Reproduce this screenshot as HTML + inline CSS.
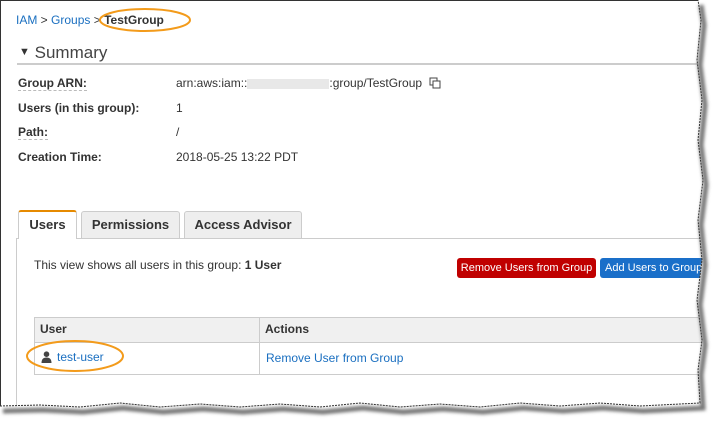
<!DOCTYPE html>
<html><head><style>
body{margin:0;width:728px;height:427px;background:#fff;font-family:"Liberation Sans",sans-serif;font-size:12px;color:#333;position:relative;overflow:hidden}
.a{position:absolute;white-space:nowrap}
.l{color:#1a6fc0}
b{font-weight:bold}
.lab{font-weight:bold;border-bottom:1px dashed #bbb}
.tab{position:absolute;top:211px;height:26px;border:1px solid #ccc;border-bottom:none;background:#eee;font-weight:bold;font-size:13px;text-align:center;line-height:25px;border-radius:3px 3px 0 0}
.btn{position:absolute;top:258px;height:20px;color:#fff;font-size:11px;line-height:20px;border-radius:3px;padding:0;text-align:center;overflow:hidden}
</style></head><body>
<div class="a" style="left:0;top:0;width:698px;height:1px;background:#333"></div>
<div class="a" style="left:0;top:0;width:1px;height:406px;background:#333"></div>
<div class="a" style="left:16px;top:13px"><span class="l">IAM</span> &gt; <span class="l">Groups</span> &gt; <b style="color:#333">TestGroup</b></div>
<svg class="a" style="left:98px;top:6px" width="96" height="30"><ellipse cx="47" cy="14" rx="45" ry="11" fill="none" stroke="#f39b1b" stroke-width="2"/></svg>
<div class="a" style="left:19px;top:43px;font-size:17px"><span style="font-size:11px;vertical-align:3px">▼</span> <span style="color:#444">Summary</span></div>
<div class="a" style="left:17px;top:63px;width:690px;height:2px;background:#ccc"></div>
<div class="a lab" style="left:18px;top:76px">Group ARN:</div>
<div class="a" style="left:176px;top:76px">arn:aws:iam::<span style="display:inline-block;width:82px;height:10px;background:#e8e8e8;vertical-align:middle"></span>:group/TestGroup &nbsp;<svg width="12" height="12" style="vertical-align:-2px"><rect x="1" y="1" width="7" height="7" fill="#fff" stroke="#444"/><rect x="4" y="4" width="7" height="7" fill="#fff" stroke="#444"/></svg></div>
<div class="a" style="left:18px;top:101px;font-weight:bold">Users (in this group):</div>
<div class="a" style="left:176px;top:101px">1</div>
<div class="a lab" style="left:18px;top:125px">Path:</div>
<div class="a" style="left:176px;top:125px">/</div>
<div class="a" style="left:18px;top:150px;font-weight:bold">Creation Time:</div>
<div class="a" style="left:176px;top:150px">2018-05-25 13:22 PDT</div>
<div class="a" style="left:16px;top:238px;width:700px;height:168px;border:1px solid #ccc"></div>
<div class="tab" style="left:18px;width:57px;background:#fff;border-top:2px solid #e68a00;height:27px;top:210px">Users</div>
<div class="tab" style="left:81px;width:97px">Permissions</div>
<div class="tab" style="left:184px;width:116px">Access Advisor</div>
<div class="a" style="left:34px;top:258px">This view shows all users in this group: <b>1 User</b></div>
<div class="btn" style="left:457px;width:139px;background:#c00000">Remove Users from Group</div>
<div class="btn" style="left:600px;width:110px;background:#1a6fc9;text-align:left;padding-left:5px">Add Users to Group</div>
<div class="a" style="left:34px;top:317px;width:690px;height:56px;border:1px solid #ccc"></div>
<div class="a" style="left:35px;top:318px;width:690px;height:24px;background:#f0f0f0;border-bottom:1px solid #ccc"></div>
<div class="a" style="left:259px;top:318px;width:1px;height:56px;background:#ccc"></div>
<div class="a" style="left:40px;top:322px;font-weight:bold">User</div>
<div class="a" style="left:265px;top:322px;font-weight:bold">Actions</div>
<svg class="a" style="left:41px;top:351px" width="11" height="12"><circle cx="5.5" cy="3.2" r="2.8" fill="#444"/><path d="M0.5,12 Q0.5,6.5 5.5,6.5 Q10.5,6.5 10.5,12 Z" fill="#444"/></svg>
<div class="a l" style="left:57px;top:350px">test-user</div>
<div class="a l" style="left:266px;top:351px">Remove User from Group</div>
<svg class="a" style="left:24px;top:338px" width="106" height="38"><ellipse cx="51" cy="18" rx="48" ry="15" fill="none" stroke="#f39b1b" stroke-width="2"/></svg>
<svg class="a" style="left:0;top:0" width="728" height="427">
<defs><filter id="f"><feGaussianBlur stdDeviation="1.5"/></filter></defs>
<path d="M698,0 L728,0 L728,427 L0,427 L0,406 L40,405 L80,407 L120,403 L160,407 L200,404 L240,407 L280,404 L320,407 L360,403 L400,407 L440,404 L480,407 L520,403 L560,406 L600,403 L640,406 L680,404 L700,403 L698,370 L702,340 L697,300 L702,260 L698,220 L703,180 L698,140 L702,100 L697,60 L701,20 Z" fill="#fff"/>
<path d="M0,406 L40,405 L80,407 L120,403 L160,407 L200,404 L240,407 L280,404 L320,407 L360,403 L400,407 L440,404 L480,407 L520,403 L560,406 L600,403 L640,406 L680,404 L700,403 L698,370 L702,340 L697,300 L702,260 L698,220 L703,180 L698,140 L702,100 L697,60 L701,20 L698,0" fill="none" stroke="#777" stroke-width="5" transform="translate(3,5)" filter="url(#f)"/>
<path d="M0,406 L40,405 L80,407 L120,403 L160,407 L200,404 L240,407 L280,404 L320,407 L360,403 L400,407 L440,404 L480,407 L520,403 L560,406 L600,403 L640,406 L680,404 L700,403 L698,370 L702,340 L697,300 L702,260 L698,220 L703,180 L698,140 L702,100 L697,60 L701,20 L698,0" fill="none" stroke="#333" stroke-width="1" stroke-dasharray="2,1"/>
</svg>
</body></html>
